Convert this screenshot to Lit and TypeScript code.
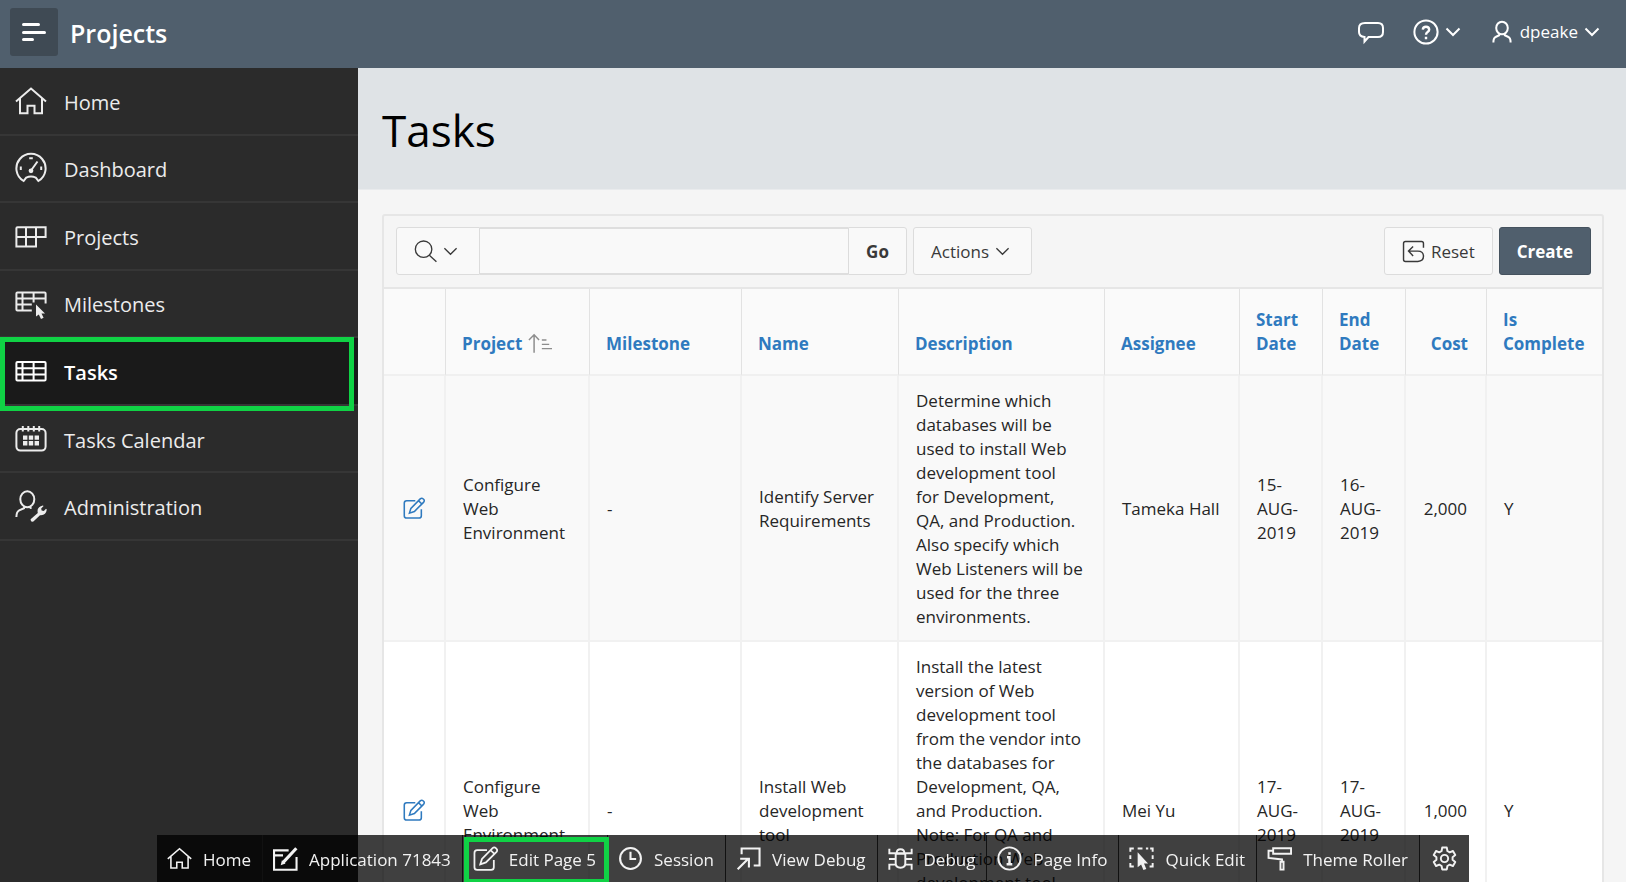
import { LitElement, html, svg, css, nothing } from "lit";
import type { TemplateResult, SVGTemplateResult } from "lit";
import { customElement, property } from "lit/decorators.js";
import { classMap } from "lit/directives/class-map.js";

interface Glyph {
  box: number;
  stroke: number;
  art: SVGTemplateResult;
}

const GLYPHS: Record<string, Glyph> = {
  home: {
    box: 32,
    stroke: 2,
    art: svg`<path d="M1 16.5 16 3.5 31 16.5M5 13.5V28.2H12.5V20.8H19.5V28.2H27V13.5"/>`,
  },
  dashboard: {
    box: 32,
    stroke: 2,
    art: svg`<path d="M8.6 29A14.6 14.6 0 1 1 23.4 29L20.8 25.6Q16 23.6 11.2 25.6Z"/><path d="M16 18.5 22.5 9.5M14.2 6.2H17.8M5.8 14.6V18M26.2 14.6V18"/><circle cx="16" cy="18.8" r="1.4" fill="currentColor"/>`,
  },
  projects: {
    box: 32,
    stroke: 2,
    art: svg`<path d="M2.5 7.3H30.6V17H1.4V8.3Q1.4 7.3 2.5 7.3M1.4 17V26.4H21V7.3M11 7.3V26.4"/>`,
  },
  milestones: {
    box: 32,
    stroke: 2,
    art: svg`<path d="M30.6 16.5V6.5Q30.6 5.5 29.6 5.5H2.4Q1.4 5.5 1.4 6.5V22.6Q1.4 23.6 2.4 23.6H16.8M1.4 11.6H30.6M1.4 17.6H16.8M7.5 5.5V23.6M18.6 5.5V15.5"/><path fill="currentColor" stroke="none" d="M21 17.6V29.6L23.8 27.4 26 32 28.6 30.8 26.5 26.4H30Z"/>`,
  },
  tasks: {
    box: 32,
    stroke: 2,
    art: svg`<rect x="1.4" y="7" width="29.2" height="18.6" rx="1"/><path d="M1.4 13.2H30.6M1.4 19.4H30.6M7.5 7V25.6M18.6 7V25.6"/>`,
  },
  calendar: {
    box: 32,
    stroke: 2,
    art: svg`<rect x="1.4" y="6" width="29.2" height="21.6" rx="4"/><path d="M7.8 3V8.4M13.3 3V8.4M18.8 3V8.4M24.2 3V8.4"/><path fill="currentColor" stroke="none" d="M8 12.4h4.4v4.4H8zM13.8 12.4h4.4v4.4h-4.4zM19.6 12.4H24v4.4h-4.4zM8 18h4.4v4.4H8zM13.8 18h4.4v4.4h-4.4zM19.6 18H24v4.4h-4.4z"/>`,
  },
  admin: {
    box: 32,
    stroke: 2,
    art: svg`<ellipse cx="12.3" cy="9.2" rx="7" ry="8"/><path d="M9.4 16.4 9 18.2 4.2 20.4Q1.4 22 1.4 27M15.4 16.4 15.8 18.8"/><path fill="currentColor" stroke="none" d="M15.6 29.2 22.8 23Q21.4 16.8 27.8 15.4L28.6 16 26.2 18.6 26.6 20.6 28.8 21 31 18.8 31.8 19.6Q31 25.8 25 25.2L18.4 31.6Q15.4 32.4 15.6 29.2Z"/>`,
  },
  menu: {
    box: 24,
    stroke: 3,
    art: svg`<path stroke-linecap="round" d="M1.5 4.5H16.5M1.5 12.5H22.5M1.5 19.5H10.5"/>`,
  },
  comment: {
    box: 26,
    stroke: 2,
    art: svg`<path d="M7 4H20Q25 4 25 9V13Q25 18 20 18H10.5L6.5 22.5V18Q1 17.5 1 13V9Q1 4 7 4Z"/>`,
  },
  help: {
    box: 26,
    stroke: 2,
    art: svg`<circle cx="13" cy="13" r="11.6"/><path stroke-width="2.4" d="M9.8 10.6Q10 7.8 13 7.8T16.2 10.6Q16.2 12 14.6 13Q13 14 13 15.8M13 17.8V20.2"/>`,
  },
  user: {
    box: 24,
    stroke: 2,
    art: svg`<ellipse cx="12" cy="8" rx="5.8" ry="6.3"/><path d="M9.6 13.8 9.2 15.2 5.6 17Q3.4 18 3.4 22.5M14.4 13.8 14.8 15.2 18.4 17Q20.6 18 20.6 22.5"/>`,
  },
  chevron: { box: 16, stroke: 2, art: svg`<path d="M1.5 4.5 8 11 14.5 4.5"/>` },
  chevronThin: { box: 16, stroke: 1.4, art: svg`<path d="M1.5 4.5 8 11 14.5 4.5"/>` },
  search: {
    box: 24,
    stroke: 1.4,
    art: svg`<circle cx="10" cy="9.6" r="8.6"/><path d="M16 16 23.4 22.6"/>`,
  },
  reset: {
    box: 24,
    stroke: 1.5,
    art: svg`<path d="M22.4 8V3.6Q22.4 1.6 20.4 1.6H3.6Q1.6 1.6 1.6 3.6V20.4Q1.6 22.4 3.6 22.4H16.6Q22.4 22 22.4 17Q22.4 11.6 16.6 11.6H7M11.6 6.8 6.8 11.6 11.6 16.6"/>`,
  },
  sort: {
    box: 26,
    stroke: 1.6,
    art: svg`<path d="M6.6 22.6V3.6M1 8.6 6.6 3 12 8.6M15 8.6H20M15 13.4H23M15 18H26"/>`,
  },
  edit: {
    box: 24,
    stroke: 1.7,
    art: svg`<path d="M13.4 4H4Q1.4 4 1.4 6.6V20.4Q1.4 23 4 23H17.4Q20 23 20 20.4V13.4"/><path d="M7 17.6 8.6 12.4 18.8 2Q20.4 .6 22.2 2.2T22.6 5.6L12.4 15.8ZM16.8 4 20.6 7.6"/>`,
  },
  application: {
    box: 24,
    stroke: 2,
    art: svg`<path d="M15 4.2H1V22.8H22.6V10.6M1 9H9.6"/><path stroke-width="3" d="M9.6 16 22.4 2.2"/><path fill="currentColor" stroke="none" d="M7.4 18.4 8.6 13.6 12 16.8Z"/>`,
  },
  session: {
    box: 24,
    stroke: 2,
    art: svg`<circle cx="12" cy="12" r="10"/><path d="M12 5.4V12.4H17.4"/>`,
  },
  viewDebug: {
    box: 24,
    stroke: 2,
    art: svg`<path d="M5.4 8V2.4H22.6V18.8H17M1.6 22.4 12 12M4 12.2H12.4V20.6"/>`,
  },
  debug: {
    box: 26,
    stroke: 2,
    art: svg`<path d="M8 8V18Q8 22.6 13 22.6T18 18V8ZM9 7.4Q9 3.4 13 3.4T17 7.4M1.4 2.8V7.6H24.6V2.8M1 13.6H8M18 13.6H25M1.4 24.6V19.4H8.2M24.6 24.6V19.4H17.8"/>`,
  },
  info: {
    box: 26,
    stroke: 2,
    art: svg`<circle cx="13" cy="13" r="11.6"/><path stroke-width="2.6" d="M13 6.4V9M10.4 11.8H13V18.8M10 19H16"/>`,
  },
  quickEdit: {
    box: 26,
    stroke: 2,
    art: svg`<path d="M1.4 6V2.6H5M9 2.6H14M17.6 2.6H20M22 2.6H24.6V6M24.6 9.6V13.6M24.6 17.6V21.4H21.4M1.4 9.6V13.6M1.4 17.6V21.4H5"/><path fill="currentColor" stroke="none" d="M9 6.6V22L12.6 19.2 15 25 18 23.8 15.6 18.2H19.8Z"/>`,
  },
  roller: {
    box: 26,
    stroke: 2,
    art: svg`<path d="M6.4 2.4H25V8H6.4ZM6.4 5H1.6V12.4L15.6 14V16.4M14 16.4H17.2V24.6H14Z"/>`,
  },
  gear: {
    box: 26,
    stroke: 2,
    art: svg`<circle cx="13" cy="13" r="3.8"/><path stroke-linejoin="round" d="M10.6 1.6H15.4L16 5.2 18.4 6.6 21.8 5.2 24.2 9.4 21.4 11.6V14.4L24.2 16.6 21.8 20.8 18.4 19.4 16 20.8 15.4 24.4H10.6L10 20.8 7.6 19.4 4.2 20.8 1.8 16.6 4.6 14.4V11.6L1.8 9.4 4.2 5.2 7.6 6.6 10 5.2Z"/>`,
  },
};

function icon(name: string, size: number): TemplateResult {
  const g = GLYPHS[name];
  return html`<svg
    class="icon"
    width=${size}
    height=${size}
    viewBox="0 0 ${g.box} ${g.box}"
    fill="none"
    stroke="currentColor"
    stroke-width=${g.stroke}
    aria-hidden="true"
  >${g.art}</svg>`;
}

const shared = css`
  * {
    box-sizing: border-box;
  }
  a {
    color: inherit;
    text-decoration: none;
  }
  button {
    font: inherit;
    color: inherit;
    background: none;
    border: 0;
    padding: 0;
    margin: 0;
    cursor: pointer;
  }
  .icon {
    display: block;
    flex: none;
  }
`;

@customElement("app-header")
export class AppHeader extends LitElement {
  static styles = [
    shared,
    css`
      :host {
        display: block;
      }
      .bar {
        display: flex;
        align-items: center;
        height: 68px;
        padding: 0 26px 4px 10px;
        background: #505f6d;
        color: #fff;
      }
      .toggle {
        display: grid;
        place-items: center;
        width: 48px;
        height: 48px;
        border-radius: 3px;
        background: #3f4a54;
      }
      .title {
        margin: 2px auto 0 12px;
        font-size: 25px;
        font-weight: 600;
        line-height: 32px;
      }
      .actions {
        display: flex;
        align-items: center;
        gap: 29px;
      }
      .action {
        display: flex;
        align-items: center;
        gap: 6px;
        line-height: 24px;
      }
    `,
  ];

  render() {
    return html`
      <header class="bar">
        <button class="toggle" aria-label="Toggle navigation">${icon("menu", 24)}</button>
        <a class="title" href="#home">Projects</a>
        <div class="actions">
          <button class="action" aria-label="Feedback">${icon("comment", 26)}</button>
          <button class="action" aria-label="Help">${icon("help", 26)}${icon("chevron", 16)}</button>
          <button class="action">${icon("user", 24)}<span>dpeake</span>${icon("chevron", 16)}</button>
        </div>
      </header>
    `;
  }
}

const NAV = [
  { icon: "home", label: "Home" },
  { icon: "dashboard", label: "Dashboard" },
  { icon: "projects", label: "Projects" },
  { icon: "milestones", label: "Milestones" },
  { icon: "tasks", label: "Tasks" },
  { icon: "calendar", label: "Tasks Calendar" },
  { icon: "admin", label: "Administration" },
];

@customElement("app-nav")
export class AppNav extends LitElement {
  @property() current = "";

  static styles = [
    shared,
    css`
      :host {
        display: block;
        background: #2b2b2b;
        color: #ececec;
      }
      .list {
        display: grid;
        grid-auto-rows: 1fr;
        height: 473px;
        margin: 0;
        padding: 0;
        list-style: none;
      }
      .entry {
        position: relative;
        border-bottom: 2px solid #363636;
      }
      .link {
        display: flex;
        align-items: center;
        gap: 17px;
        height: 100%;
        padding: 0 15px;
        font-size: 20px;
        line-height: 28px;
      }
      .label {
        padding-top: 4px;
      }
      .current {
        background: #1a1a1a;
        color: #fff;
        font-weight: 600;
      }
      .marker {
        position: absolute;
        inset: -1px 4px -7px 0;
        border: 5px solid #10d245;
        pointer-events: none;
        z-index: 1;
      }
    `,
  ];

  render() {
    return html`
      <nav aria-label="Main">
        <ul class="list">
          ${NAV.map((n) => {
            const current = n.label === this.current;
            return html`<li class=${classMap({ entry: true, current })}>
              <a class="link" href="#${n.icon}" aria-current=${current ? "page" : nothing}>
                ${icon(n.icon, 32)}<span class="label">${n.label}</span>
              </a>
              ${current ? html`<span class="marker"></span>` : nothing}
            </li>`;
          })}
        </ul>
      </nav>
    `;
  }
}

interface Task {
  project: string;
  milestone: string;
  name: string;
  description: string[];
  assignee: string;
  start: string;
  end: string;
  cost: string;
  complete: string;
}

const TASKS: Task[] = [
  {
    project: "Configure Web Environment",
    milestone: "-",
    name: "Identify Server Requirements",
    description: [
      "Determine which",
      "databases will be",
      "used to install Web",
      "development tool",
      "for Development,",
      "QA, and Production.",
      "Also specify which",
      "Web Listeners will be",
      "used for the three",
      "environments.",
    ],
    assignee: "Tameka Hall",
    start: "15-AUG-2019",
    end: "16-AUG-2019",
    cost: "2,000",
    complete: "Y",
  },
  {
    project: "Configure Web Environment",
    milestone: "-",
    name: "Install Web development tool",
    description: [
      "Install the latest",
      "version of Web",
      "development tool",
      "from the vendor into",
      "the databases for",
      "Development, QA,",
      "and Production.",
      "Note: For QA and",
      "Production Web",
      "development tool",
      "should be",
      "configured as \"run",
      "time\" only.",
    ],
    assignee: "Mei Yu",
    start: "17-AUG-2019",
    end: "17-AUG-2019",
    cost: "1,000",
    complete: "Y",
  },
];

@customElement("task-report")
export class TaskReport extends LitElement {
  static styles = [
    shared,
    css`
      :host {
        display: block;
      }
      .region {
        border: 2px solid #e6e6e6;
        border-radius: 3px;
      }
      .toolbar {
        display: flex;
        align-items: stretch;
        height: 73px;
        padding: 11px 11px 12px 12px;
        border-bottom: 2px solid #e6e6e6;
        color: #393939;
      }
      .btn {
        display: flex;
        align-items: center;
        justify-content: center;
        gap: 6px;
        padding: 1px 17px 0;
        border: 1px solid #dcdcdc;
        border-radius: 3px;
        background: #f9f9f9;
        line-height: 24px;
      }
      .search {
        justify-content: flex-start;
        width: 84px;
        padding-top: 0;
        border-radius: 3px 0 0 3px;
      }
      .query {
        width: 368px;
        min-width: 0;
        padding: 0 12px;
        border: 2px solid #dedede;
        border-width: 2px 0;
        border-radius: 0;
        background: #f9f9f9;
        font: inherit;
        outline: none;
      }
      .go {
        width: 59px;
        border-radius: 0 3px 3px 0;
        font-weight: 700;
      }
      .actions {
        margin-left: 6px;
        margin-right: auto;
        padding-right: 21px;
      }
      .create {
        margin-left: 6px;
        border-color: #45525e;
        background: #505f6d;
        color: #fff;
        font-weight: 700;
      }
      .report {
        width: 100%;
        table-layout: fixed;
        border-collapse: separate;
        border-spacing: 0;
        color: #262626;
        line-height: 24px;
      }
      .c-edit { width: 62px; }
      .c-project { width: 144px; }
      .c-milestone { width: 152px; }
      .c-name { width: 157px; }
      .c-description { width: 206px; }
      .c-assignee { width: 135px; }
      .c-date { width: 83px; }
      .c-cost { width: 81px; }
      .c-complete { width: 115px; }
      .head {
        padding: 19px 16px 18px;
        border-right: 1px solid #e2e2e2;
        border-bottom: 2px solid #f0f0f0;
        background: #fafafa;
        color: #2f7abf;
        text-align: left;
        vertical-align: bottom;
        font-weight: 700;
      }
      .head-link {
        display: inline-flex;
        align-items: center;
        gap: 6px;
      }
      .sort {
        color: #8d8d8d;
      }
      .cell {
        padding: 13px 16px 11px 17px;
        border-right: 2px solid #f1f1f1;
        border-bottom: 2px solid #f1f1f1;
        background: #fff;
        vertical-align: middle;
      }
      .row:nth-child(odd) .cell {
        background: #f9f9f9;
      }
      .head:last-child,
      .cell:last-child {
        border-right: 0;
      }
      .text {
        padding-right: 12px;
      }
      .lines {
        padding-right: 12px;
        white-space: pre-line;
      }
      .number {
        padding-left: 8px;
        padding-right: 18px;
        text-align: right;
      }
      .edit {
        padding: 0;
        color: #2f7abf;
      }
      .edit-link {
        display: grid;
        place-items: center;
      }
    `,
  ];

  render() {
    return html`
      <section class="region" aria-label="Tasks report">
        <div class="toolbar">
          <button class="btn search" aria-label="Select columns to search">
            ${icon("search", 23)}${icon("chevronThin", 15)}
          </button>
          <input class="query" type="text" aria-label="Search" />
          <button class="btn go">Go</button>
          <button class="btn actions">Actions${icon("chevronThin", 15)}</button>
          <button class="btn reset">${icon("reset", 23)}Reset</button>
          <button class="btn create">Create</button>
        </div>
        <table class="report">
          <colgroup>
            <col class="c-edit" />
            <col class="c-project" />
            <col class="c-milestone" />
            <col class="c-name" />
            <col class="c-description" />
            <col class="c-assignee" />
            <col class="c-date" />
            <col class="c-date" />
            <col class="c-cost" />
            <col class="c-complete" />
          </colgroup>
          <thead>
            <tr>
              <th class="head" aria-label="Edit"></th>
              <th class="head" aria-sort="ascending">
                <a class="head-link" href="#sort">Project<span class="sort">${icon("sort", 24)}</span></a>
              </th>
              <th class="head"><a href="#sort">Milestone</a></th>
              <th class="head"><a href="#sort">Name</a></th>
              <th class="head"><a href="#sort">Description</a></th>
              <th class="head"><a href="#sort">Assignee</a></th>
              <th class="head"><a href="#sort">Start Date</a></th>
              <th class="head"><a href="#sort">End Date</a></th>
              <th class="head number"><a href="#sort">Cost</a></th>
              <th class="head"><a href="#sort">Is Complete</a></th>
            </tr>
          </thead>
          <tbody>
            ${TASKS.map(
              (t) => html`<tr class="row">
                <td class="cell edit">
                  <a class="edit-link" href="#edit" aria-label="Edit ${t.name}">${icon("edit", 22)}</a>
                </td>
                <td class="cell">${t.project}</td>
                <td class="cell">${t.milestone}</td>
                <td class="cell text">${t.name}</td>
                <td class="cell lines">${t.description.join("\n")}</td>
                <td class="cell text">${t.assignee}</td>
                <td class="cell">${t.start}</td>
                <td class="cell">${t.end}</td>
                <td class="cell number">${t.cost}</td>
                <td class="cell">${t.complete}</td>
              </tr>`
            )}
          </tbody>
        </table>
      </section>
    `;
  }
}

const TOOLS = [
  { icon: "home", label: "Home" },
  { icon: "application", label: "Application 71843" },
  { icon: "edit", label: "Edit Page 5", marked: true },
  { icon: "session", label: "Session" },
  { icon: "viewDebug", label: "View Debug" },
  { icon: "debug", label: "Debug" },
  { icon: "info", label: "Page Info" },
  { icon: "quickEdit", label: "Quick Edit" },
  { icon: "roller", label: "Theme Roller" },
  { icon: "gear", label: "" },
];

@customElement("dev-toolbar")
export class DevToolbar extends LitElement {
  static styles = [
    shared,
    css`
      :host {
        position: fixed;
        left: 0;
        right: 0;
        bottom: 0;
        display: flex;
        justify-content: center;
        z-index: 2;
      }
      .tools {
        display: flex;
        height: 47px;
        background: rgba(0, 0, 0, 0.75);
        color: #f2f2f2;
      }
      .tool {
        position: relative;
        display: flex;
        align-items: center;
        gap: 11px;
        padding: 0 11px 0 10px;
        border-right: 1px solid #111;
        line-height: 24px;
        white-space: nowrap;
      }
      .tool:last-child {
        border-right: 0;
        padding: 0 12px;
      }
      .tool-label {
        padding-top: 2px;
      }
      .marker {
        position: absolute;
        inset: 2px -2px -2px 1px;
        border: 5px solid #10d245;
        pointer-events: none;
      }
    `,
  ];

  render() {
    return html`
      <div class="tools" role="toolbar" aria-label="Developer toolbar">
        ${TOOLS.map(
          (t) => html`<button class="tool" aria-label=${t.label || "Options"}>
            ${icon(t.icon, 25)}${t.label ? html`<span class="tool-label">${t.label}</span>` : nothing}
            ${t.marked ? html`<span class="marker"></span>` : nothing}
          </button>`
        )}
      </div>
    `;
  }
}

@customElement("app-root")
export class AppRoot extends LitElement {
  static styles = [
    shared,
    css`
      :host {
        display: grid;
        grid-template-rows: auto minmax(0, 1fr);
        height: 100vh;
        overflow: hidden;
        background: #f5f5f5;
        font-family: "Open Sans", "Noto Sans", sans-serif;
        font-size: 17px;
        line-height: 24px;
      }
      .body {
        display: grid;
        grid-template-columns: 358px minmax(0, 1fr);
        min-height: 0;
      }
      .main {
        min-width: 0;
        overflow: hidden;
      }
      .hero {
        padding: 30px 24px 27px;
        border-bottom: 1px solid #e9ebed;
        background: #dfe3e6;
      }
      .heading {
        margin: 0;
        color: #000;
        font-size: 44px;
        font-weight: 500;
        line-height: 64px;
      }
      .content {
        padding: 24px 22px 24px 24px;
      }
    `,
  ];

  render() {
    return html`
      <app-header></app-header>
      <div class="body">
        <app-nav current="Tasks"></app-nav>
        <main class="main">
          <div class="hero"><h1 class="heading">Tasks</h1></div>
          <div class="content"><task-report></task-report></div>
        </main>
      </div>
      <dev-toolbar></dev-toolbar>
    `;
  }
}
